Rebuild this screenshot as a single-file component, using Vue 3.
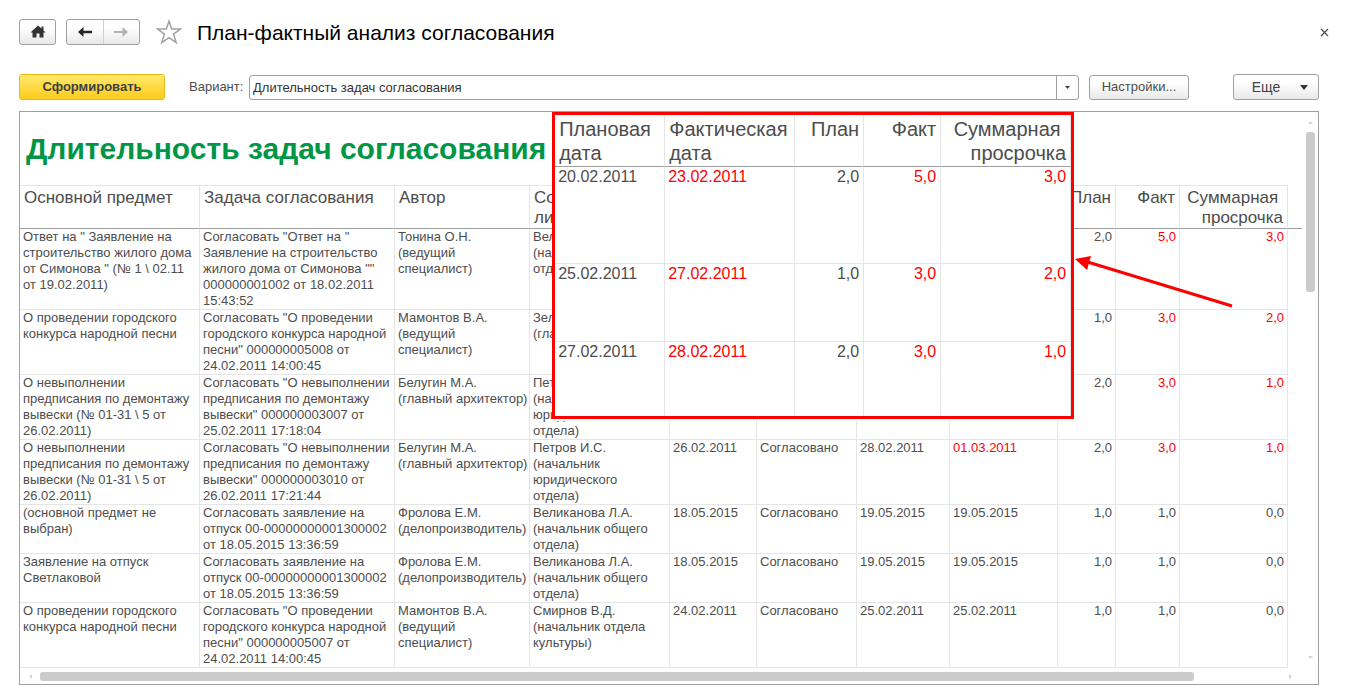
<script setup>
import { ref } from 'vue'

const variant = ref('Длительность задач согласования')

const columns = [
  { title: 'Основной предмет', width: 180 },
  { title: 'Задача согласования', width: 195 },
  { title: 'Автор', width: 135 },
  { title: 'Согл.\nлицо', width: 140 },
  { title: '', width: 87 },
  { title: '', width: 100 },
  { title: 'Плановая\nдата', width: 93 },
  { title: 'Фактическая\nдата', width: 108 },
  { title: 'План', width: 58, num: true },
  { title: 'Факт', width: 64, num: true },
  { title: 'Суммарная \nпросрочка', width: 108, num: true },
]

const rows = [
  {
    late: [7, 9, 10],
    cells: [
      'Ответ на " Заявление на\nстроительство жилого дома\nот Симонова " (№ 1 \\ 02.11\nот 19.02.2011)',
      'Согласовать "Ответ на "\nЗаявление на строительство\nжилого дома от Симонова ""\n000000001002 от 18.02.2011\n15:43:52',
      'Тонина О.Н.\n(ведущий\nспециалист)',
      'Вел\n(на\nотд',
      '', 'Согласовано', '20.02.2011', '23.02.2011', '2,0', '5,0', '3,0',
    ],
  },
  {
    late: [7, 9, 10],
    cells: [
      'О проведении городского\nконкурса народной песни',
      'Согласовать "О проведении\nгородского конкурса народной\nпесни" 000000005008 от\n24.02.2011 14:00:45',
      'Мамонтов В.А.\n(ведущий\nспециалист)',
      'Зел\n(гла',
      '', 'Согласовано', '25.02.2011', '27.02.2011', '1,0', '3,0', '2,0',
    ],
  },
  {
    late: [7, 9, 10],
    cells: [
      'О невыполнении\nпредписания по демонтажу\nвывески (№ 01-31 \\ 5 от\n26.02.2011)',
      'Согласовать "О невыполнении\nпредписания по демонтажу\nвывески" 000000003007 от\n25.02.2011 17:18:04',
      'Белугин М.А.\n(главный архитектор)',
      'Петров И.С.\n(начальник\nюридического\nотдела)',
      '', 'Согласовано', '27.02.2011', '28.02.2011', '2,0', '3,0', '1,0',
    ],
  },
  {
    late: [7, 9, 10],
    cells: [
      'О невыполнении\nпредписания по демонтажу\nвывески (№ 01-31 \\ 5 от\n26.02.2011)',
      'Согласовать "О невыполнении\nпредписания по демонтажу\nвывески" 000000003010 от\n26.02.2011 17:21:44',
      'Белугин М.А.\n(главный архитектор)',
      'Петров И.С.\n(начальник\nюридического\nотдела)',
      '26.02.2011', 'Согласовано', '28.02.2011', '01.03.2011', '2,0', '3,0', '1,0',
    ],
  },
  {
    late: [],
    cells: [
      '(основной предмет не\nвыбран)',
      'Согласовать заявление на\nотпуск 00-00000000001300002\nот 18.05.2015 13:36:59',
      'Фролова Е.М.\n(делопроизводитель)',
      'Великанова Л.А.\n(начальник общего\nотдела)',
      '18.05.2015', 'Согласовано', '19.05.2015', '19.05.2015', '1,0', '1,0', '0,0',
    ],
  },
  {
    late: [],
    cells: [
      'Заявление на отпуск\nСветлаковой',
      'Согласовать заявление на\nотпуск 00-00000000001300002\nот 18.05.2015 13:36:59',
      'Фролова Е.М.\n(делопроизводитель)',
      'Великанова Л.А.\n(начальник общего\nотдела)',
      '18.05.2015', 'Согласовано', '19.05.2015', '19.05.2015', '1,0', '1,0', '0,0',
    ],
  },
  {
    late: [],
    cells: [
      'О проведении городского\nконкурса народной песни',
      'Согласовать "О проведении\nгородского конкурса народной\nпесни" 000000005007 от\n24.02.2011 14:00:45',
      'Мамонтов В.А.\n(ведущий\nспециалист)',
      'Смирнов В.Д.\n(начальник отдела\nкультуры)',
      '24.02.2011', 'Согласовано', '25.02.2011', '25.02.2011', '1,0', '1,0', '0,0',
    ],
  },
]

const calloutColumns = [
  { title: 'Плановая\nдата', width: 110 },
  { title: 'Фактическая\nдата', width: 130 },
  { title: 'План', width: 69, num: true },
  { title: 'Факт', width: 77, num: true },
  { title: 'Суммарная \nпросрочка', width: 130, num: true },
]

const calloutRows = [
  ['20.02.2011', '23.02.2011', '2,0', '5,0', '3,0'],
  ['25.02.2011', '27.02.2011', '1,0', '3,0', '2,0'],
  ['27.02.2011', '28.02.2011', '2,0', '3,0', '1,0'],
]
const calloutLate = [1, 3, 4]
</script>

<template>
  <div class="window">
    <header class="titlebar">
      <button class="btn home" type="button" aria-label="Домой">
        <svg width="16" height="14" viewBox="0 0 16 14">
          <path d="M8 0.5 L11.5 3.6 V1.5 H13.5 V5.4 L15.5 7.5 H13.5 V12.5 H9.5 V8.5 H6.5 V12.5 H2.5 V7.5 H0.5 Z" fill="#333" />
        </svg>
      </button>
      <div class="nav">
        <button type="button" aria-label="Назад">
          <svg width="16" height="12" viewBox="0 0 16 12">
            <path d="M1 6 L6.5 1 V4.7 H15 V7.3 H6.5 V11 Z" fill="#262626" />
          </svg>
        </button>
        <button type="button" aria-label="Вперед">
          <svg width="16" height="12" viewBox="0 0 16 12">
            <path d="M15 6 L9.5 1 V4.9 H1 V7.1 H9.5 V11 Z" fill="#b2b2b2" />
          </svg>
        </button>
      </div>
      <button class="bare star" type="button" aria-label="В избранное">
        <svg width="26" height="26" viewBox="0 0 26 26">
          <path d="M13 2.2 L15.7 10 H24.3 L17.6 15.1 L20.2 23.6 L13 18.6 L5.8 23.6 L8.4 15.1 L1.7 10 H10.3 Z" fill="#fff" stroke="#a0a0a0" stroke-width="1.5" />
        </svg>
      </button>
      <h1>План-фактный анализ согласования</h1>
      <button class="bare close" type="button" aria-label="Закрыть">
        <svg width="9" height="9" viewBox="0 0 9 9">
          <path d="M1 1 L8 8 M8 1 L1 8" stroke="#505050" stroke-width="1.3" />
        </svg>
      </button>
    </header>

    <div class="toolbar">
      <button class="btn run" type="button">Сформировать</button>
      <label for="variant">Вариант:</label>
      <div class="combo">
        <select id="variant" v-model="variant">
          <option>Длительность задач согласования</option>
        </select>
        <span class="drop">
          <svg width="5" height="3" viewBox="0 0 5 3"><path d="M0 0 H5 L2.5 3 Z" fill="#404040" /></svg>
        </span>
      </div>
      <button class="btn settings" type="button">Настройки...</button>
      <button class="btn more" type="button">
        <span>Еще</span>
        <svg width="8" height="5" viewBox="0 0 8 5"><path d="M0 0 H8 L4 5 Z" fill="#333" /></svg>
      </button>
    </div>

    <main class="panel">
      <section class="sheet">
        <h2>Длительность задач согласования</h2>
        <table class="report">
          <colgroup>
            <col v-for="(c, i) in columns" :key="i" :style="{ width: c.width + 'px' }" />
            <col class="tail-col" />
          </colgroup>
          <thead>
            <tr>
              <th v-for="(c, i) in columns" :key="i" :class="{ num: c.num }">{{ c.title }}</th>
              <td class="tail"></td>
            </tr>
          </thead>
          <tbody>
            <tr v-for="(r, i) in rows" :key="i">
              <td
                v-for="(t, j) in r.cells"
                :key="j"
                :class="{ num: columns[j].num, late: r.late.includes(j) }"
              >{{ t }}</td>
            </tr>
          </tbody>
        </table>
      </section>

      <div class="vscroll">
        <svg width="5" height="3" viewBox="0 0 5 3"><path d="M0 3 H5 L2.5 0 Z" fill="#d4d4d4" /></svg>
        <div class="track"><div class="thumb"></div></div>
        <svg width="5" height="3" viewBox="0 0 5 3"><path d="M0 0 H5 L2.5 3 Z" fill="#d4d4d4" /></svg>
      </div>
      <div class="hscroll">
        <svg width="3" height="5" viewBox="0 0 3 5"><path d="M3 0 V5 L0 2.5 Z" fill="#d4d4d4" /></svg>
        <div class="track"><div class="thumb"></div></div>
        <svg width="3" height="5" viewBox="0 0 3 5"><path d="M0 0 V5 L3 2.5 Z" fill="#d4d4d4" /></svg>
      </div>

      <aside class="callout">
        <table>
          <colgroup>
            <col v-for="(c, i) in calloutColumns" :key="i" :style="{ width: c.width + 'px' }" />
          </colgroup>
          <thead>
            <tr>
              <th v-for="(c, i) in calloutColumns" :key="i" :class="{ num: c.num }">{{ c.title }}</th>
            </tr>
          </thead>
          <tbody>
            <tr v-for="(r, i) in calloutRows" :key="i">
              <td
                v-for="(t, j) in r"
                :key="j"
                :class="{ num: calloutColumns[j].num, late: calloutLate.includes(j) }"
              >{{ t }}</td>
            </tr>
          </tbody>
        </table>
        <svg class="arrow" width="160" height="56" viewBox="0 0 160 56">
          <path d="M12 6.5 L158 51" stroke="#f00" stroke-width="3" />
          <path d="M1 4 L17 1 L13 15 Z" fill="#f00" />
        </svg>
      </aside>
    </main>
  </div>
</template>

<style>
body {
  background: #fff;
}
</style>

<style scoped>
.window {
  box-sizing: border-box;
  padding: 18px 26px 14px 19px;
  font: 13px/16px "Liberation Sans", Arial, sans-serif;
  color: #4d4d4d;
}
button,
select {
  font: inherit;
  color: inherit;
  margin: 0;
  padding: 0;
}
svg {
  display: block;
}
.titlebar {
  display: flex;
  align-items: center;
  height: 28px;
  margin-right: -10px;
}
.btn,
.nav {
  display: flex;
  align-items: center;
  justify-content: center;
  box-sizing: border-box;
  border: 1px solid #a0a0a0;
  border-radius: 3px;
  background: linear-gradient(#fff 30%, #e8e8e8);
}
.home {
  width: 37px;
  height: 26px;
}
.nav {
  width: 74px;
  height: 26px;
  margin-left: 10px;
}
.nav button {
  flex: 1;
  align-self: stretch;
  display: flex;
  align-items: center;
  justify-content: center;
  border: 0;
  background: none;
}
.nav button + button {
  border-left: 1px solid #d0d0d0;
}
.bare {
  border: 0;
  background: none;
}
.star {
  margin-left: 16px;
}
h1 {
  flex: 1;
  margin: 0 0 0 15px;
  padding-top: 2px;
  font-size: 21px;
  line-height: 24px;
  font-weight: 400;
  color: #000;
}
.toolbar {
  display: flex;
  align-items: center;
  height: 26px;
  margin-top: 28px;
}
.run {
  width: 146px;
  height: 26px;
  border-color: #f0b90f;
  background: linear-gradient(#ffe96b, #fbcb1c);
  font-weight: 700;
  color: #404040;
}
label {
  margin-left: 24px;
  width: 60px;
}
.combo {
  flex: 1;
  display: flex;
  box-sizing: border-box;
  height: 25px;
  border: 1px solid #a0a0a0;
  border-radius: 3px;
  position: relative;
}
select {
  flex: 1;
  appearance: none;
  border: 0;
  background: none;
  padding: 2px 0 0 3px;
  color: #333;
}
.drop {
  position: absolute;
  top: 0;
  right: 0;
  bottom: 0;
  width: 21px;
  display: flex;
  align-items: center;
  justify-content: center;
  border-left: 1px solid #a0a0a0;
  pointer-events: none;
}
.settings {
  width: 100px;
  height: 25px;
  margin-left: 10px;
}
.more {
  width: 86px;
  height: 26px;
  margin-left: 44px;
  gap: 20px;
  padding-left: 8px;
  font-size: 14px;
  color: #404040;
}
.panel {
  display: grid;
  grid-template-columns: minmax(0, 1fr) 16px;
  margin-top: 11px;
  border: 1px solid #a0a0a0;
  position: relative;
}
h2 {
  margin: 0;
  padding: 20px 6px;
  height: 33px;
  font-size: 30px;
  line-height: 33px;
  font-weight: 700;
  color: #009646;
  white-space: nowrap;
}
table {
  width: 100%;
  table-layout: fixed;
  border-spacing: 0;
}
th,
td {
  padding: 0 3px;
  border-right: 1px solid #e5e5e5;
  border-bottom: 1px solid #e5e5e5;
  text-align: left;
  vertical-align: top;
  font-weight: 400;
  white-space: pre;
}
th {
  height: 40px;
  padding: 2px 4px 0;
  border-top: 1px solid #e5e5e5;
  border-bottom-color: #a0a0a0;
  font-size: 17px;
  line-height: 20px;
}
th.num,
td.num {
  text-align: right;
}
td.late {
  color: #f00;
}
.tail-col {
  width: 14px;
}
td.tail {
  padding: 0;
  border-right: 0;
  border-bottom-color: #a0a0a0;
}
.vscroll {
  display: flex;
  flex-direction: column;
  align-items: center;
  padding: 9px 0;
  gap: 8px;
}
.vscroll .track {
  flex: 1;
  width: 9px;
}
.vscroll .thumb {
  height: 31%;
}
.hscroll {
  grid-column: 1 / -1;
  display: flex;
  align-items: center;
  height: 16px;
  padding: 0 26px 0 9px;
  gap: 8px;
}
.hscroll .track {
  flex: 1;
  height: 9px;
}
.hscroll .thumb {
  width: 93%;
  height: 9px;
}
.thumb {
  border-radius: 3px;
  background: #cbcbcb;
}
.callout {
  position: absolute;
  top: 0;
  left: 41%;
  box-sizing: border-box;
  width: 522px;
  border: 3px solid #f00;
  background: #fff;
  box-shadow: 0 2px 0 #fff;
}
.callout th {
  height: 49px;
  border-top: 0;
  font-size: 20px;
  line-height: 24px;
  padding-top: 2px;
}
.callout td {
  height: 77px;
  font-size: 16px;
  line-height: 20px;
}
.callout td.num {
  padding-right: 4px;
}
.callout tbody tr:first-child td {
  height: 96px;
}
.callout tbody tr:last-child td {
  height: 74px;
  border-bottom: 0;
}
.arrow {
  position: absolute;
  top: 140px;
  left: 100%;
  margin-left: 3px;
}
</style>
